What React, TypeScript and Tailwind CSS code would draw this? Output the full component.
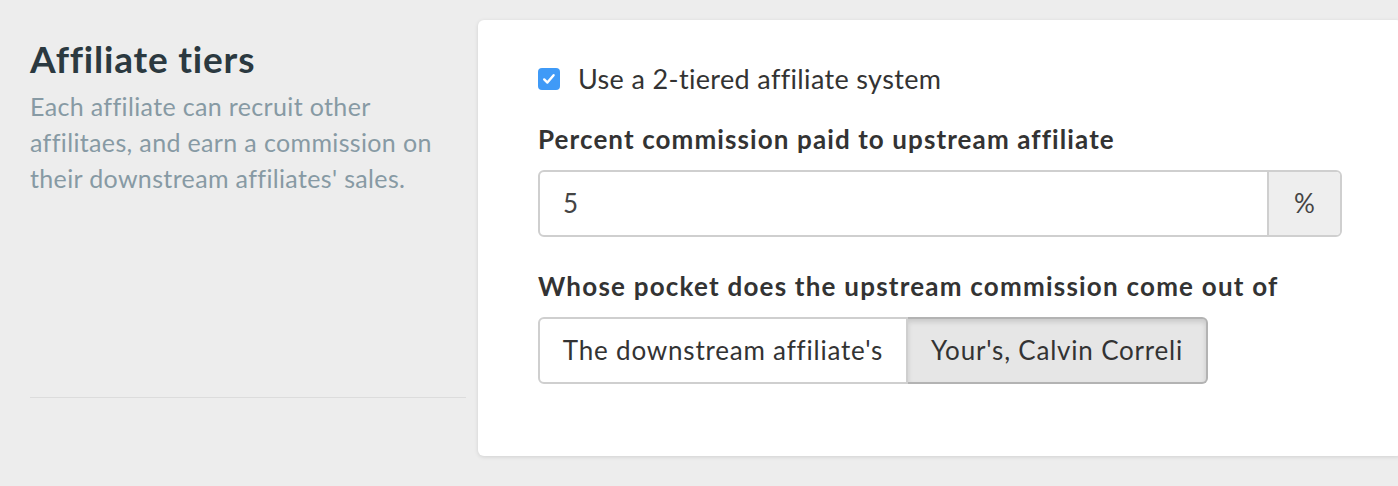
import React from "react";

export default function App() {
  return (
    <div
      className="w-[1398px] h-[486px] overflow-hidden bg-[#ededed] flex items-start pt-[20px] pl-[30px]"
      style={{ fontFamily: "Lato, 'Noto Sans', sans-serif" }}
    >
      <div className="w-[436px] shrink-0 flex flex-col h-[378px]">
        <h2 className="text-[37px] leading-[40px] tracking-[0.8px] font-bold text-[#2b3940] mt-[19px]">Affiliate tiers</h2>
        <p className="text-[25px] leading-[36px] tracking-[0.35px] text-[#879aa4] mt-[9px]">
          Each affiliate can recruit other affilitaes, and earn a commission on their downstream affiliates' sales.
        </p>
        <div className="mt-auto h-px bg-[#dcdcdc]" />
      </div>
      <div className="ml-[12px] w-[924px] shrink-0 h-[436px] bg-white rounded-[6px] shadow-[0_1px_4px_rgba(0,0,0,0.12)] px-[60px] pt-[48px]">
        <label className="flex items-center gap-[18px] h-[22px]">
          <span className="w-[22px] h-[22px] rounded-[4px] bg-[#3f9af7] flex items-center justify-center">
            <svg width="16" height="16" viewBox="0 0 16 16">
              <path d="M3.2 8.4 L6.4 11.6 L12.6 4.2" fill="none" stroke="white" strokeWidth="2.4" strokeLinecap="round" strokeLinejoin="round" />
            </svg>
          </span>
          <span className="text-[27px] tracking-[0.35px] text-[#333]">Use a 2-tiered affiliate system</span>
        </label>
        <div className="mt-[34px] text-[26px] leading-[30px] tracking-[1.1px] font-bold text-[#333]">Percent commission paid to upstream affiliate</div>
        <div className="mt-[16px] flex h-[67px] border-2 border-[#cfcfcf] rounded-[6px] overflow-hidden">
          <div className="flex-1 flex items-center pl-[23px] text-[26px] text-[#444]">5</div>
          <div className="w-[73px] border-l-2 border-[#cfcfcf] bg-[#eeeeee] flex items-center justify-center text-[26px] text-[#444]">%</div>
        </div>
        <div className="mt-[34px] text-[26px] leading-[30px] tracking-[1.22px] font-bold text-[#333]">Whose pocket does the upstream commission come out of</div>
        <div className="mt-[16px] flex h-[67px]">
          <div className="w-[370px] border-2 border-[#cfcfcf] rounded-l-[6px] flex items-center justify-center text-[26px] tracking-[0.8px] text-[#333] bg-white">The downstream affiliate's</div>
          <div className="w-[300px] border-2 border-l-0 border-[#b3b3b3] rounded-r-[6px] flex items-center justify-center text-[26px] tracking-[0.8px] text-[#333] bg-[#e6e6e6] shadow-[inset_0_3px_5px_rgba(0,0,0,0.125)]">Your's, Calvin Correli</div>
        </div>
      </div>
    </div>
  );
}
